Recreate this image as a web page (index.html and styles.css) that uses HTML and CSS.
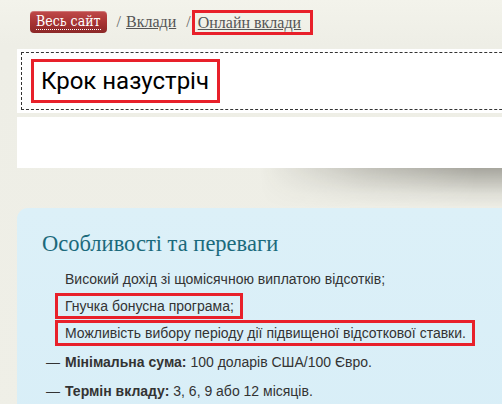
FILE: index.html
```html
<!DOCTYPE html>
<html lang="uk">
<head>
<meta charset="utf-8">
<title>Крок назустріч</title>
<link rel="stylesheet" href="styles.css">
</head>
<body>
<div class="page">
  <nav class="crumbs">
    <a class="home" href="#"><span>Весь сайт</span></a>
    <span class="sep">/</span>
    <a class="crumb" href="#">Вклади</a>
    <span class="sep">/</span>
    <span class="mark crumb-mark"><a class="crumb" href="#">Онлайн вклади</a></span>
  </nav>

  <div class="title-box">
    <div class="dashed">
      <h1 class="mark title">Крок назустріч</h1>
    </div>
  </div>

  <div class="blank-box"></div>
  <div class="shadow"></div>

  <section class="info">
    <h2 class="info-title">Особливості та переваги</h2>
    <ul class="features">
      <li class="feat">Високий дохід зі щомісячною виплатою відсотків;</li>
      <li class="feat mark">Гнучка бонусна програма;</li>
      <li class="feat mark">Можливість вибору періоду дії підвищеної відсоткової ставки.</li>
    </ul>
    <ul class="terms">
      <li class="term"><span class="dash">—</span><span><b>Мінімальна сума:</b> 100 доларів США/100 Євро.</span></li>
      <li class="term"><span class="dash">—</span><span><b>Термін вкладу:</b> 3, 6, 9 або 12 місяців.</span></li>
    </ul>
  </section>
</div>
</body>
</html>
```

FILE: styles.css
```css
html, body {
  margin: 0;
  padding: 0;
}
body {
  background: linear-gradient(to bottom, #f3f3eb 0, #eeeee6 45px, #efefe7 100%);
  overflow: hidden;
  font-family: "Liberation Sans", Arial, sans-serif;
  color: #333;
}
.page {
  width: 540px;
  padding-left: 17px;
}
.crumbs {
  display: flex;
  align-items: center;
  height: 44px;
  padding-left: 13px;
  box-sizing: border-box;
  font-family: "Liberation Serif", "Times New Roman", serif;
  font-size: 16px;
}
.home {
  display: flex;
  align-items: center;
  height: 22px;
  padding: 0 6px;
  border-radius: 4px;
  background: linear-gradient(to bottom, #c04a4a 0%, #a83434 50%, #8b2727 100%);
  box-shadow: inset 0 1px 0 rgba(255,255,255,0.25);
  color: #fff;
  text-decoration: none;
  font-family: "DejaVu Serif", Georgia, serif;
  font-stretch: condensed;
  font-size: 14px;
}
.home span {
  border-bottom: 1px dotted #fff;
  line-height: 15px;
}
.sep {
  color: #666;
  margin: 0 5px 0 10px;
}
.sep + .crumb-mark {
  margin-left: -4px;
}
.crumb {
  color: #555;
}
.mark {
  border: 3px solid #e8202a;
}
.crumb-mark {
  padding: 2px 9px 2px 3px;
  line-height: 15px;
}
.title-box {
  margin-top: 5px;
  background: #fff;
  padding: 3px 0 3px 4px;
}
.dashed {
  border: 1px dashed #333;
  border-right: none;
  padding: 6px 0 0 9px;
  box-sizing: border-box;
  height: 58px;
}
.title {
  display: inline-block;
  margin: 0;
  padding: 0 8px 0 7px;
  font-family: Roboto, "Noto Sans", sans-serif;
  font-weight: normal;
  font-size: 24px;
  line-height: 38px;
  color: #000;
}
.blank-box {
  margin-top: 4px;
  height: 51px;
  background: #fff;
}
.shadow {
  height: 40px;
  background: linear-gradient(to bottom, rgba(40,38,30,0.36), rgba(40,38,30,0.08) 65%, rgba(40,38,30,0));
  -webkit-mask-image: linear-gradient(to right, transparent 45%, rgba(0,0,0,0.6) 65%, #000 85%);
  mask-image: linear-gradient(to right, transparent 45%, rgba(0,0,0,0.6) 65%, #000 85%);
}
.info {
  background: linear-gradient(to bottom, #dcf0f8, #d8eef7);
  border-radius: 11px 0 0 0;
  padding: 22px 0 20px 25px;
  min-height: 200px;
}
.info-title {
  margin: 0 0 8px;
  font-family: "Liberation Serif", Georgia, serif;
  font-weight: normal;
  font-size: 22.5px;
  line-height: 28px;
  color: #1b6a7c;
}
.features, .terms {
  list-style: none;
  margin: 0;
  padding: 0;
}
.features {
  padding-left: 13px;
  display: flex;
  flex-direction: column;
  align-items: flex-start;
  gap: 1px;
}
.feat {
  border: 3px solid transparent;
  padding: 0 6px 0 7px;
  font-size: 14px;
  line-height: 20px;
}
.feat.mark {
  border-color: #e8202a;
}
.terms {
  margin-top: 2px;
  padding-left: 4px;
}
.term {
  display: flex;
  gap: 8px;
  font-size: 14px;
  line-height: 29px;
}
.term b {
  color: #333;
}
.dash {
  width: 11px;
}
```
